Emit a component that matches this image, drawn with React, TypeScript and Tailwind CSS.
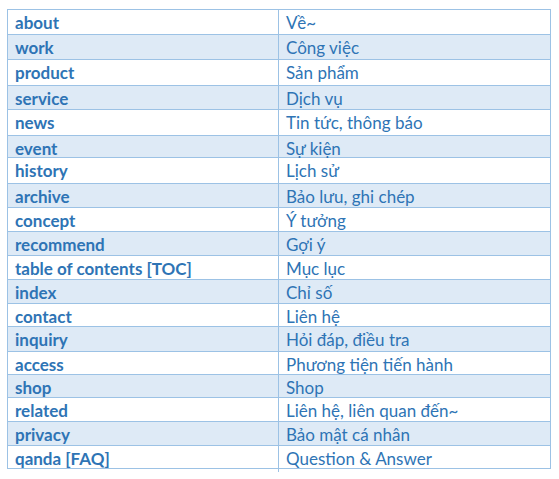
const rows: [string, string, string][] = [
  ["about", "Về~", "h-[25px]"],
  ["work", "Công việc", "h-[25px]"],
  ["product", "Sản phẩm", "h-[26px]"],
  ["service", "Dịch vụ", "h-[24px]"],
  ["news", "Tin tức, thông báo", "h-[26px]"],
  ["event", "Sự kiện", "h-[22px]"],
  ["history", "Lịch sử", "h-[26px]"],
  ["archive", "Bảo lưu, ghi chép", "h-[24px]"],
  ["concept", "Ý tưởng", "h-[24px]"],
  ["recommend", "Gợi ý", "h-[24px]"],
  ["table of contents [TOC]", "Mục lục", "h-[24px]"],
  ["index", "Chỉ số", "h-[24px]"],
  ["contact", "Liên hệ", "h-[23px]"],
  ["inquiry", "Hỏi đáp, điều tra", "h-[25px]"],
  ["access", "Phương tiện tiến hành", "h-[23px]"],
  ["shop", "Shop", "h-[23px]"],
  ["related", "Liên hệ, liên quan đến~", "h-[24px]"],
  ["privacy", "Bảo mật cá nhân", "h-[24px]"],
  ["qanda [FAQ]", "Question & Answer", "h-[23px]"],
];

export default function App() {
  return (
    <div className="w-[559px] h-[479px] bg-white pt-[9px] pl-[7px] font-['Lato',sans-serif] text-[17px] text-[#2e74b5]">
      <div className="w-[544px] border-t border-x border-[#9cc2e5]">
        {rows.map(([en, vi, h], i) => (
          <div
            key={en}
            className={`grid grid-cols-[271px_1fr] border-b border-[#9cc2e5] ${h} ${
              i % 2 === 1 ? "bg-[#deeaf6]" : "bg-white"
            }`}
          >
            <div className="flex items-center border-r border-[#9cc2e5] pl-[7px] font-bold">
              {en}
            </div>
            <div className="flex items-center pl-[7px]">{vi}</div>
          </div>
        ))}
      </div>
    </div>
  );
}
